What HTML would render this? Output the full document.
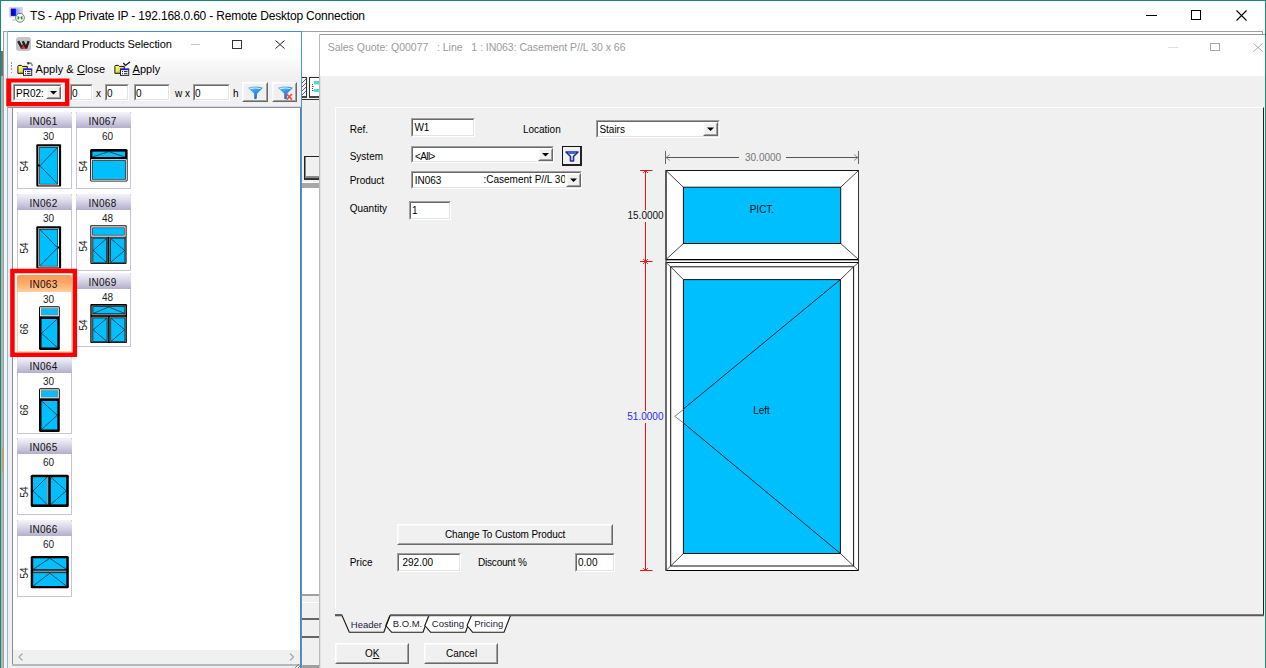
<!DOCTYPE html><html><head><meta charset="utf-8"><style>
*{margin:0;padding:0}
html,body{width:1266px;height:668px;overflow:hidden;background:#fff;position:relative;font-family:'Liberation Sans',sans-serif}
.a{position:absolute}
.t{position:absolute;white-space:nowrap;font-family:'Liberation Sans',sans-serif}
svg{overflow:visible}
</style></head><body>
<svg class="a" style="left:5px;top:3px" width="30" height="25">
<defs><linearGradient id="scr" x1="0" y1="0" x2="1" y2="0"><stop offset="0" stop-color="#0000c8"/><stop offset="0.45" stop-color="#0a14f0"/><stop offset="0.55" stop-color="#8a9cff"/><stop offset="1" stop-color="#c8d4ff"/></linearGradient></defs>
<rect x="4.1" y="3.9" width="13.7" height="10.5" fill="#d6d6d6"/>
<rect x="5.8" y="5.6" width="10.3" height="7.3" fill="url(#scr)"/>
<rect x="7.1" y="16.4" width="3.6" height="1.3" fill="#cacaca"/>
<circle cx="15" cy="14.8" r="4.4" fill="#f6f6f6" stroke="#7a7a7a" stroke-width="1"/>
<path d="M12.6 13.4l1.3 1.4l-1.3 1.4M17.4 13.4l-1.3 1.4l1.3 1.4" stroke="#1a9a1a" stroke-width="1.3" fill="none"/>
</svg>
<div class="t " style="left:30px;top:9.84px;font-size:12px;line-height:12px;color:#000;letter-spacing:-0.19px">TS - App Private IP - 192.168.0.60 - Remote Desktop Connection</div>
<div class="a" style="left:1146px;top:15px;width:11px;height:1px;background:#000"></div>
<div class="a" style="left:1191px;top:10px;width:10px;height:10px;border:1px solid #000;box-sizing:border-box"></div>
<svg class="a" style="left:1236px;top:10px" width="11" height="11"><path d="M0.5 0.5L10.5 10.5M10.5 0.5L0.5 10.5" stroke="#000" stroke-width="1.1"/></svg>
<div class="a" style="left:3px;top:31px;width:1260px;height:1px;background:#a0a0a0"></div>
<div class="a" style="left:3px;top:31px;width:1px;height:637px;background:#a0a0a0"></div>
<div class="a" style="left:1px;top:32px;width:2px;height:19px;background:#fff"></div>
<div class="a" style="left:1px;top:51px;width:2px;height:25px;background:#6e6e6e"></div>
<div class="a" style="left:1px;top:76px;width:2px;height:592px;background:#b4b4b4"></div>
<div class="a" style="left:2px;top:447px;width:1px;height:25px;background:#d8a050"></div>
<div class="a" style="left:4px;top:32px;width:3px;height:636px;background:#f6f4f2"></div>
<div class="a" style="left:302px;top:32px;width:17px;height:636px;background:#fff"></div>
<div class="a" style="left:302px;top:76px;width:17px;height:24px;background:#f0f0f0"></div>
<div class="a" style="left:300px;top:77px;width:7px;height:21px;border:1px solid #333;border-bottom:2px solid #444;box-sizing:border-box;background:#f4f4f4"></div>
<svg class="a" style="left:301px;top:78px" width="5" height="18"><path d="M0 6L5 1M0 10L5 5M0 14L5 9M1 17L5 13" stroke="#555" stroke-width="0.9"/></svg>
<div class="a" style="left:309px;top:77px;width:10px;height:21px;border:1px solid #333;border-bottom:2px solid #444;border-right:none;box-sizing:border-box;background:#fff"></div>
<svg class="a" style="left:311px;top:80px" width="8" height="15"><rect x="3" y="1" width="5" height="3.5" fill="#4dd8e0"/><rect x="3" y="9" width="5" height="3" fill="#4dd8e0"/><path d="M1.5 4v8M1.5 6.5h1.5M1.5 10.5h1.5" stroke="#444" stroke-dasharray="1 1"/></svg>
<div class="a" style="left:302px;top:99px;width:17px;height:1px;background:#333"></div>
<div class="a" style="left:302px;top:100px;width:17px;height:83px;background:#f0f0f0"></div>
<div class="a" style="left:304px;top:156px;width:15px;height:24px;border-top:1px solid #222;border-left:1px solid #222;border-bottom:2px solid #333;box-sizing:border-box;background:#f0f0f0"></div>
<div class="a" style="left:305px;top:157px;width:1px;height:21px;background:#8a8a8a"></div>
<div class="a" style="left:305px;top:176px;width:14px;height:2px;background:#8a8a8a"></div>
<div class="a" style="left:302px;top:182px;width:17px;height:1px;background:#fff"></div>
<div class="a" style="left:302px;top:183px;width:17px;height:5px;background:#a8a8a8"></div>
<div class="a" style="left:302px;top:594px;width:17px;height:74px;background:#f0f0f0"></div>
<div class="a" style="left:302px;top:594px;width:17px;height:2px;background:#a0a0a0"></div>
<div class="a" style="left:302px;top:602px;width:17px;height:1px;background:#fff"></div>
<div class="a" style="left:302px;top:618px;width:17px;height:2px;background:#666"></div>
<div class="a" style="left:302px;top:636px;width:17px;height:2px;background:#666"></div>
<div class="a" style="left:302px;top:665px;width:17px;height:3px;background:#a0a0a0"></div>
<div class="a" style="left:7px;top:31px;width:295px;height:637px;background:#f0f0f0"></div>
<div class="a" style="left:7px;top:31px;width:295px;height:1px;background:#3f8fdc"></div>
<div class="a" style="left:7px;top:31px;width:1px;height:637px;background:#82b9e9"></div>
<div class="a" style="left:301px;top:31px;width:1px;height:637px;background:#4a93dd"></div>
<div class="a" style="left:8px;top:32px;width:293px;height:25px;background:#fff"></div>
<svg class="a" style="left:16px;top:37px" width="15" height="14">
<rect x="0" y="0" width="15" height="14" rx="3" fill="#c4c4c4"/>
<path d="M2.2 4.2L6.2 11.3L8.3 6.5M6.8 4.2L10.1 11.3L12.6 4.2" stroke="#222" stroke-width="2.4" fill="none" stroke-linejoin="bevel"/>
<path d="M5 11.8L7.2 7.4L9.4 11.8Z" fill="#ff2020"/>
</svg>
<div class="t " style="left:35.5px;top:39.19px;font-size:11px;line-height:11px;color:#000;letter-spacing:-0.12px">Standard Products Selection</div>
<div class="a" style="left:191px;top:44px;width:9px;height:1px;background:#c8c8c8"></div>
<div class="a" style="left:232px;top:40px;width:10px;height:9px;border:1px solid #333;box-sizing:border-box"></div>
<svg class="a" style="left:275px;top:40px" width="10" height="9"><path d="M0.5 0.5L9.5 8.5M9.5 0.5L0.5 8.5" stroke="#222" stroke-width="1"/></svg>
<div class="a" style="left:8px;top:57px;width:293px;height:21px;background:linear-gradient(#fdfdfd,#f0f0f0)"></div>
<div class="a" style="left:11px;top:62.0px;width:1px;height:1.6px;background:#9a9a9a"></div>
<div class="a" style="left:11px;top:65.2px;width:1px;height:1.6px;background:#9a9a9a"></div>
<div class="a" style="left:11px;top:68.4px;width:1px;height:1.6px;background:#9a9a9a"></div>
<div class="a" style="left:11px;top:71.6px;width:1px;height:1.6px;background:#9a9a9a"></div>
<svg class="a" style="left:16px;top:61px" width="18" height="16">
<defs><linearGradient id="fo16" x1="0" y1="0" x2="1" y2="1"><stop offset="0" stop-color="#ffff80"/><stop offset="0.45" stop-color="#f0ea50"/><stop offset="1" stop-color="#8a8a10"/></linearGradient></defs>
<path d="M1.9 5.4Q1.9 4.4 2.9 4.4H5.4L6.4 5.4H11.3V12.3H1.9Z" fill="url(#fo16)" stroke="#111" stroke-width="1"/>
<rect x="7.5" y="8.1" width="8.2" height="6.3" fill="#fff" stroke="#2a2a2a" stroke-width="1"/>
<rect x="7" y="7.6" width="9.2" height="1.6" fill="#1a1aff"/>
<path d="M9 10.6h1M11 10.6h3.5M9 12.7h1M11 12.7h3.5" stroke="#222" stroke-width="1"/><path d="M12.6 2.6Q15.2 0.6 16.4 4.9" stroke="#7a7a7a" fill="none" stroke-width="1.4"/><path d="M10.9 1.3L13.6 1.6L12 4.1Z" fill="#111"/></svg>
<div class="t " style="left:35.5px;top:64.19px;font-size:11px;line-height:11px;color:#000;letter-spacing:0.05px">Apply &amp; <u>C</u>lose</div>
<svg class="a" style="left:113px;top:61px" width="18" height="16">
<defs><linearGradient id="fo113" x1="0" y1="0" x2="1" y2="1"><stop offset="0" stop-color="#ffff80"/><stop offset="0.45" stop-color="#f0ea50"/><stop offset="1" stop-color="#8a8a10"/></linearGradient></defs>
<path d="M1.9 5.4Q1.9 4.4 2.9 4.4H5.4L6.4 5.4H11.3V12.3H1.9Z" fill="url(#fo113)" stroke="#111" stroke-width="1"/>
<rect x="7.5" y="8.1" width="8.2" height="6.3" fill="#fff" stroke="#2a2a2a" stroke-width="1"/>
<rect x="7" y="7.6" width="9.2" height="1.6" fill="#1a1aff"/>
<path d="M9 10.6h1M11 10.6h3.5M9 12.7h1M11 12.7h3.5" stroke="#222" stroke-width="1"/><path d="M10.3 2L12.4 4.4L17 0.9" stroke="#111" fill="none" stroke-width="1.3"/></svg>
<div class="t " style="left:132.5px;top:64.19px;font-size:11px;line-height:11px;color:#000;letter-spacing:0.05px"><u>A</u>pply</div>
<div class="a" style="left:8px;top:78px;width:293px;height:29px;background:#f0f0f0"></div>
<div class="a" style="left:13px;top:84px;width:49px;height:17px;background:#fff;border-top:1px solid #a0a0a0;border-left:1px solid #a0a0a0;border-right:1px solid #fff;border-bottom:1px solid #fff;box-sizing:border-box;"></div>
<div class="a" style="left:14px;top:85px;width:47px;height:15px;border-top:1px solid #696969;border-left:1px solid #696969;border-right:1px solid #e3e3e3;border-bottom:1px solid #e3e3e3;box-sizing:border-box;"></div>
<div class="t " style="left:16px;top:89.44px;font-size:10px;line-height:10px;color:#000;">PR02:</div>
<div class="a" style="left:46px;top:86px;width:15px;height:13px;background:#f0f0f0;border-top:1px solid #fff;border-left:1px solid #fff;border-right:1px solid #696969;border-bottom:1px solid #696969;box-sizing:border-box;"></div>
<div class="a" style="left:47px;top:87px;width:13px;height:11px;border-right:1px solid #a0a0a0;border-bottom:1px solid #a0a0a0;border-top:1px solid #f8f8f8;border-left:1px solid #f8f8f8;box-sizing:border-box;"></div>
<svg class="a" style="left:46px;top:86px" width="15" height="13"><path d="M4.0 5.0h7l-3.5 3.5z" fill="#000"/></svg>
<div class="a" style="left:70px;top:84px;width:23px;height:17px;background:#fff;border-top:1px solid #a0a0a0;border-left:1px solid #a0a0a0;border-right:1px solid #fff;border-bottom:1px solid #fff;box-sizing:border-box;"></div>
<div class="a" style="left:71px;top:85px;width:21px;height:15px;border-top:1px solid #696969;border-left:1px solid #696969;border-right:1px solid #e3e3e3;border-bottom:1px solid #e3e3e3;box-sizing:border-box;"></div>
<div class="t " style="left:72px;top:89.44px;font-size:10px;line-height:10px;color:#000;">0</div>
<div class="t " style="left:96px;top:89.44px;font-size:10px;line-height:10px;color:#000;">x</div>
<div class="a" style="left:105px;top:84px;width:24px;height:17px;background:#fff;border-top:1px solid #a0a0a0;border-left:1px solid #a0a0a0;border-right:1px solid #fff;border-bottom:1px solid #fff;box-sizing:border-box;"></div>
<div class="a" style="left:106px;top:85px;width:22px;height:15px;border-top:1px solid #696969;border-left:1px solid #696969;border-right:1px solid #e3e3e3;border-bottom:1px solid #e3e3e3;box-sizing:border-box;"></div>
<div class="t " style="left:107px;top:89.44px;font-size:10px;line-height:10px;color:#000;">0</div>
<div class="a" style="left:134px;top:84px;width:36px;height:17px;background:#fff;border-top:1px solid #a0a0a0;border-left:1px solid #a0a0a0;border-right:1px solid #fff;border-bottom:1px solid #fff;box-sizing:border-box;"></div>
<div class="a" style="left:135px;top:85px;width:34px;height:15px;border-top:1px solid #696969;border-left:1px solid #696969;border-right:1px solid #e3e3e3;border-bottom:1px solid #e3e3e3;box-sizing:border-box;"></div>
<div class="t " style="left:136px;top:89.44px;font-size:10px;line-height:10px;color:#000;">0</div>
<div class="t " style="left:175px;top:89.44px;font-size:10px;line-height:10px;color:#000;">w x</div>
<div class="a" style="left:193px;top:84px;width:37px;height:17px;background:#fff;border-top:1px solid #a0a0a0;border-left:1px solid #a0a0a0;border-right:1px solid #fff;border-bottom:1px solid #fff;box-sizing:border-box;"></div>
<div class="a" style="left:194px;top:85px;width:35px;height:15px;border-top:1px solid #696969;border-left:1px solid #696969;border-right:1px solid #e3e3e3;border-bottom:1px solid #e3e3e3;box-sizing:border-box;"></div>
<div class="t " style="left:195px;top:89.44px;font-size:10px;line-height:10px;color:#000;">0</div>
<div class="t " style="left:233px;top:89.44px;font-size:10px;line-height:10px;color:#000;">h</div>
<div class="a" style="left:242px;top:82px;width:26px;height:20px;background:#f0f0f0;border-top:1px solid #fff;border-left:1px solid #fff;border-right:1px solid #696969;border-bottom:1px solid #696969;box-sizing:border-box;"></div>
<div class="a" style="left:243px;top:83px;width:24px;height:18px;border-right:1px solid #a0a0a0;border-bottom:1px solid #a0a0a0;border-top:1px solid #f8f8f8;border-left:1px solid #f8f8f8;box-sizing:border-box;"></div>
<svg class="a" style="left:247px;top:86px" width="17" height="15">
<defs><linearGradient id="fg247" x1="0" y1="0" x2="0.6" y2="1"><stop offset="0" stop-color="#7cc6f6"/><stop offset="0.5" stop-color="#3a98e4"/><stop offset="1" stop-color="#1864c4"/></linearGradient></defs>
<path d="M0.8 1.8Q8.4 -0.8 16 1.8L10.2 7.4L9.7 12.6Q8.6 13.6 7.3 12.8L7.1 7.4Z" fill="url(#fg247)"/>
<path d="M3 2.6Q8.4 1.4 13.6 2.6" stroke="#d6f0ff" stroke-width="1" fill="none"/></svg>
<div class="a" style="left:272px;top:82px;width:25px;height:20px;background:#f0f0f0;border-top:1px solid #fff;border-left:1px solid #fff;border-right:1px solid #696969;border-bottom:1px solid #696969;box-sizing:border-box;"></div>
<div class="a" style="left:273px;top:83px;width:23px;height:18px;border-right:1px solid #a0a0a0;border-bottom:1px solid #a0a0a0;border-top:1px solid #f8f8f8;border-left:1px solid #f8f8f8;box-sizing:border-box;"></div>
<svg class="a" style="left:277px;top:86px" width="17" height="15">
<defs><linearGradient id="fg277" x1="0" y1="0" x2="0.6" y2="1"><stop offset="0" stop-color="#7cc6f6"/><stop offset="0.5" stop-color="#3a98e4"/><stop offset="1" stop-color="#1864c4"/></linearGradient></defs>
<path d="M0.8 1.8Q8.4 -0.8 16 1.8L10.2 7.4L9.7 12.6Q8.6 13.6 7.3 12.8L7.1 7.4Z" fill="url(#fg277)"/>
<path d="M3 2.6Q8.4 1.4 13.6 2.6" stroke="#d6f0ff" stroke-width="1" fill="none"/><path d="M9.6 8L15 13.6M15 8L9.6 13.6" stroke="#ff4646" stroke-width="1.7"/></svg>
<div class="a" style="left:8px;top:106px;width:293px;height:1px;background:#d6d7dc"></div>
<div class="a" style="left:8px;top:107px;width:293px;height:1px;background:#8e92a2"></div>
<div class="a" style="left:12px;top:108px;width:289px;height:557px;background:#fff"></div>
<div class="a" style="left:12px;top:108px;width:1px;height:557px;background:#8a8c98"></div>
<div class="a" style="left:12px;top:664px;width:289px;height:2px;background:#b4b8c2"></div>
<svg class="a" style="left:294px;top:662px" width="7" height="6"><path d="M1 6L6 1M4 6L6 4" stroke="#777" stroke-width="1"/></svg>
<div class="a" style="left:300px;top:108px;width:1px;height:560px;background:#6a7f95"></div>
<div class="a" style="left:13px;top:650px;width:287px;height:14px;background:#f0f0f0"></div>
<svg class="a" style="left:18px;top:653px" width="6" height="8"><path d="M4.5 0.5L1 4l3.5 3.5" stroke="#a8a8a8" fill="none" stroke-width="1.2"/></svg>
<svg class="a" style="left:289px;top:653px" width="6" height="8"><path d="M1 0.5L4.5 4L1 7.5" stroke="#a8a8a8" fill="none" stroke-width="1.2"/></svg>
<div class="a" style="left:17px;top:112px;width:55px;height:77px;border:1px solid #c6c3da;border-top:none;box-sizing:border-box;background:#fff"></div>
<div class="a" style="left:17px;top:112px;width:55px;height:16px;background:linear-gradient(#f5f4fa,#d6d3e6 50%,#b3afca);border-radius:3px 3px 0 0"></div>
<div class="t" style="left:16px;top:116.83px;width:55px;text-align:center;font-size:10px;line-height:10px;color:#111;letter-spacing:0.3px">IN061</div>
<div class="t" style="left:37px;top:131.73px;width:23px;text-align:center;font-size:10px;line-height:10px;color:#222">30</div>
<div class="t" style="left:15px;top:161px;width:20px;height:10px;text-align:center;font-size:10px;line-height:10px;color:#222;transform:rotate(-90deg)">54</div>
<svg class="a" style="left:17px;top:112px" width="55" height="77"><rect x="19.3" y="32.2" width="24.8" height="42.4" rx="1" fill="#000"/><rect x="21.4" y="34.1" width="20.6" height="39.3" fill="#fff"/><rect x="21.4" y="34.1" width="20.6" height="1.2" fill="#8a8a8a"/><rect x="22.3" y="35.0" width="18.8" height="37.5" fill="#111"/><rect x="22.9" y="35.6" width="17.6" height="36.3" fill="#00bfff"/><path d="M40.5 35.6L22.9 53.75L40.5 71.9" stroke="#1a1a1a" stroke-width="0.7" fill="none"/><rect x="20.5" y="52.5" width="2.2" height="2" fill="#000"/></svg>
<div class="a" style="left:76px;top:112px;width:55px;height:77px;border:1px solid #c6c3da;border-top:none;box-sizing:border-box;background:#fff"></div>
<div class="a" style="left:76px;top:112px;width:55px;height:16px;background:linear-gradient(#f5f4fa,#d6d3e6 50%,#b3afca);border-radius:3px 3px 0 0"></div>
<div class="t" style="left:75px;top:116.83px;width:55px;text-align:center;font-size:10px;line-height:10px;color:#111;letter-spacing:0.3px">IN067</div>
<div class="t" style="left:96px;top:131.73px;width:23px;text-align:center;font-size:10px;line-height:10px;color:#222">60</div>
<div class="t" style="left:74px;top:161px;width:20px;height:10px;text-align:center;font-size:10px;line-height:10px;color:#222;transform:rotate(-90deg)">54</div>
<svg class="a" style="left:76px;top:112px" width="55" height="77"><rect x="14.1" y="37.1" width="37.5" height="32.4" rx="1.5" fill="#000"/><rect x="16.4" y="39.6" width="32.6" height="5.4" fill="#00bfff"/><path d="M16.4 45.0L32.7 39.6L49.0 45.0" stroke="#1a1a1a" stroke-width="0.7" fill="none"/><rect x="14.9" y="47.0" width="35.9" height="21.8" rx="1" fill="#fff"/><rect x="15.7" y="47.6" width="34.3" height="20.6" fill="#7a7a7a"/><rect x="16.2" y="48.6" width="33.3" height="18.6" fill="#111"/><rect x="16.6" y="49.0" width="32.5" height="18.0" fill="#00bfff"/></svg>
<div class="a" style="left:17px;top:194px;width:55px;height:77px;border:1px solid #c6c3da;border-top:none;box-sizing:border-box;background:#fff"></div>
<div class="a" style="left:17px;top:194px;width:55px;height:16px;background:linear-gradient(#f5f4fa,#d6d3e6 50%,#b3afca);border-radius:3px 3px 0 0"></div>
<div class="t" style="left:16px;top:198.83px;width:55px;text-align:center;font-size:10px;line-height:10px;color:#111;letter-spacing:0.3px">IN062</div>
<div class="t" style="left:37px;top:213.73px;width:23px;text-align:center;font-size:10px;line-height:10px;color:#222">30</div>
<div class="t" style="left:15px;top:243px;width:20px;height:10px;text-align:center;font-size:10px;line-height:10px;color:#222;transform:rotate(-90deg)">54</div>
<svg class="a" style="left:17px;top:194px" width="55" height="77"><rect x="19.3" y="32.2" width="24.8" height="42.4" rx="1" fill="#000"/><rect x="21.4" y="34.1" width="20.6" height="39.3" fill="#fff"/><rect x="21.4" y="34.1" width="20.6" height="1.2" fill="#8a8a8a"/><rect x="22.3" y="35.0" width="18.8" height="37.5" fill="#111"/><rect x="22.9" y="35.6" width="17.6" height="36.3" fill="#00bfff"/><path d="M22.9 35.6L40.5 53.75L22.9 71.9" stroke="#1a1a1a" stroke-width="0.7" fill="none"/><rect x="41" y="52.5" width="2.2" height="2" fill="#000"/></svg>
<div class="a" style="left:76px;top:194px;width:55px;height:77px;border:1px solid #c6c3da;border-top:none;box-sizing:border-box;background:#fff"></div>
<div class="a" style="left:76px;top:194px;width:55px;height:16px;background:linear-gradient(#f5f4fa,#d6d3e6 50%,#b3afca);border-radius:3px 3px 0 0"></div>
<div class="t" style="left:75px;top:198.83px;width:55px;text-align:center;font-size:10px;line-height:10px;color:#111;letter-spacing:0.3px">IN068</div>
<div class="t" style="left:96px;top:213.73px;width:23px;text-align:center;font-size:10px;line-height:10px;color:#222">48</div>
<div class="t" style="left:74px;top:241.2px;width:20px;height:10px;text-align:center;font-size:10px;line-height:10px;color:#222;transform:rotate(-90deg)">54</div>
<svg class="a" style="left:76px;top:194px" width="55" height="77"><rect x="14.3" y="31.3" width="36.3" height="38.8" rx="1" fill="#111"/><rect x="15.3" y="32.3" width="34.3" height="10.4" fill="#fff"/><rect x="16.3" y="33.5" width="32.3" height="8" fill="#111"/><rect x="16.9" y="34.1" width="31.1" height="6.8" fill="#00bfff"/><rect x="15.3" y="43.5" width="16.2" height="25.6" fill="#8a8a8a"/><rect x="16.6" y="44" width="14.3" height="24.7" fill="#111"/><rect x="17.2" y="44.5" width="13.1" height="23.8" fill="#00bfff"/><path d="M30.299999999999997 44.5L17.2 56.4L30.299999999999997 68.3" stroke="#1a1a1a" stroke-width="0.7" fill="none"/><rect x="33.2" y="43.5" width="16.4" height="25.6" fill="#8a8a8a"/><rect x="34.2" y="44" width="14.9" height="24.7" fill="#111"/><rect x="34.8" y="44.5" width="13.8" height="23.8" fill="#00bfff"/><path d="M34.8 44.5L48.599999999999994 56.4L34.8 68.3" stroke="#1a1a1a" stroke-width="0.7" fill="none"/></svg>
<div class="a" style="left:17px;top:275px;width:55px;height:77px;border:1px solid #f9d3a8;border-top:none;box-sizing:border-box;background:#fff"></div>
<div class="a" style="left:17px;top:275px;width:55px;height:16.5px;background:linear-gradient(#ff9a55,#ffa466 40%,#ffbb80 75%,#ffcf9c);border-radius:3px 3px 0 0"></div>
<div class="t" style="left:16px;top:279.83px;width:55px;text-align:center;font-size:10px;line-height:10px;color:#111;letter-spacing:0.3px">IN063</div>
<div class="t" style="left:37px;top:294.73px;width:23px;text-align:center;font-size:10px;line-height:10px;color:#222">30</div>
<div class="t" style="left:15px;top:324.3px;width:20px;height:10px;text-align:center;font-size:10px;line-height:10px;color:#222;transform:rotate(-90deg)">66</div>
<svg class="a" style="left:17px;top:276px" width="55" height="77"><rect x="22" y="30.3" width="20.8" height="43.7" rx="1.5" fill="#000"/><rect x="23" y="31.3" width="18.8" height="9" fill="#fff"/><rect x="23.8" y="32.1" width="17.2" height="7.4" fill="#8a8a8a"/><rect x="24.6" y="32.9" width="15.6" height="5.8" fill="#00bfff"/><rect x="24.5" y="43" width="15.8" height="28.5" fill="#00bfff"/><path d="M40.3 43L24.5 57.25L40.3 71.5" stroke="#1a1a1a" stroke-width="0.7" fill="none"/></svg>
<div class="a" style="left:76px;top:273px;width:55px;height:74px;border:1px solid #c6c3da;border-top:none;box-sizing:border-box;background:#fff"></div>
<div class="a" style="left:76px;top:273px;width:55px;height:15.5px;background:linear-gradient(#f5f4fa,#d6d3e6 50%,#b3afca);border-radius:3px 3px 0 0"></div>
<div class="t" style="left:75px;top:277.83px;width:55px;text-align:center;font-size:10px;line-height:10px;color:#111;letter-spacing:0.3px">IN069</div>
<div class="t" style="left:96px;top:292.73px;width:23px;text-align:center;font-size:10px;line-height:10px;color:#222">48</div>
<div class="t" style="left:74px;top:319.5px;width:20px;height:10px;text-align:center;font-size:10px;line-height:10px;color:#222;transform:rotate(-90deg)">54</div>
<svg class="a" style="left:76px;top:276px" width="55" height="77"><rect x="14.3" y="28.1" width="36.7" height="38.9" rx="1" fill="#000"/><rect x="15.5" y="29.6" width="34.3" height="9.6" rx="1" fill="#8a8a8a"/><rect x="16.6" y="30.3" width="32.6" height="7.8" fill="#111"/><rect x="17.3" y="30.9" width="31.2" height="6.5" fill="#00bfff"/><path d="M17.3 37.4L32.9 30.9L48.5 37.4" stroke="#1a1a1a" stroke-width="0.7" fill="none"/><rect x="15.3" y="40.8" width="16.9" height="25.5" rx="1" fill="#8a8a8a"/><rect x="16.5" y="41.7" width="14.9" height="24.2" fill="#111"/><rect x="17.2" y="42.3" width="13.5" height="23" fill="#00bfff"/><path d="M30.7 42.3L17.2 53.8L30.7 65.3" stroke="#1a1a1a" stroke-width="0.7" fill="none"/><rect x="33.5" y="40.8" width="16.8" height="25.5" rx="1" fill="#8a8a8a"/><rect x="34.5" y="41.7" width="14.9" height="24.2" fill="#111"/><rect x="35.1" y="42.3" width="13.5" height="23" fill="#00bfff"/><path d="M35.1 42.3L48.6 53.8L35.1 65.3" stroke="#1a1a1a" stroke-width="0.7" fill="none"/></svg>
<div class="a" style="left:17px;top:357px;width:55px;height:77px;border:1px solid #c6c3da;border-top:none;box-sizing:border-box;background:#fff"></div>
<div class="a" style="left:17px;top:357px;width:55px;height:16px;background:linear-gradient(#f5f4fa,#d6d3e6 50%,#b3afca);border-radius:3px 3px 0 0"></div>
<div class="t" style="left:16px;top:361.83px;width:55px;text-align:center;font-size:10px;line-height:10px;color:#111;letter-spacing:0.3px">IN064</div>
<div class="t" style="left:37px;top:376.73px;width:23px;text-align:center;font-size:10px;line-height:10px;color:#222">30</div>
<div class="t" style="left:15px;top:405px;width:20px;height:10px;text-align:center;font-size:10px;line-height:10px;color:#222;transform:rotate(-90deg)">66</div>
<svg class="a" style="left:17px;top:358px" width="55" height="77"><rect x="22" y="30.3" width="20.8" height="43.7" rx="1.5" fill="#000"/><rect x="23" y="31.3" width="18.8" height="9" fill="#fff"/><rect x="23.8" y="32.1" width="17.2" height="7.4" fill="#8a8a8a"/><rect x="24.6" y="32.9" width="15.6" height="5.8" fill="#00bfff"/><rect x="24.5" y="43" width="15.8" height="28.5" fill="#00bfff"/><path d="M24.5 43L40.3 57.25L24.5 71.5" stroke="#1a1a1a" stroke-width="0.7" fill="none"/></svg>
<div class="a" style="left:17px;top:438px;width:55px;height:77px;border:1px solid #c6c3da;border-top:none;box-sizing:border-box;background:#fff"></div>
<div class="a" style="left:17px;top:438px;width:55px;height:16px;background:linear-gradient(#f5f4fa,#d6d3e6 50%,#b3afca);border-radius:3px 3px 0 0"></div>
<div class="t" style="left:16px;top:442.83px;width:55px;text-align:center;font-size:10px;line-height:10px;color:#111;letter-spacing:0.3px">IN065</div>
<div class="t" style="left:37px;top:457.73px;width:23px;text-align:center;font-size:10px;line-height:10px;color:#222">60</div>
<div class="t" style="left:15px;top:486.9px;width:20px;height:10px;text-align:center;font-size:10px;line-height:10px;color:#222;transform:rotate(-90deg)">54</div>
<svg class="a" style="left:17px;top:440px" width="55" height="77"><rect x="13.7" y="34.7" width="38.1" height="32.2" rx="1.5" fill="#000"/><rect x="16.0" y="37.2" width="14.0" height="27.2" fill="#00bfff"/><path d="M30.0 37.2L16.0 50.800000000000004L30.0 64.4" stroke="#1a1a1a" stroke-width="0.7" fill="none"/><rect x="33.8" y="37.2" width="15.4" height="27.2" fill="#00bfff"/><path d="M33.8 37.2L49.199999999999996 50.800000000000004L33.8 64.4" stroke="#1a1a1a" stroke-width="0.7" fill="none"/><rect x="30" y="37.2" width="1.3" height="27.2" fill="#9a9a9a"/></svg>
<div class="a" style="left:17px;top:520px;width:55px;height:77px;border:1px solid #c6c3da;border-top:none;box-sizing:border-box;background:#fff"></div>
<div class="a" style="left:17px;top:520px;width:55px;height:16px;background:linear-gradient(#f5f4fa,#d6d3e6 50%,#b3afca);border-radius:3px 3px 0 0"></div>
<div class="t" style="left:16px;top:524.83px;width:55px;text-align:center;font-size:10px;line-height:10px;color:#111;letter-spacing:0.3px">IN066</div>
<div class="t" style="left:37px;top:539.73px;width:23px;text-align:center;font-size:10px;line-height:10px;color:#222">60</div>
<div class="t" style="left:15px;top:568.2px;width:20px;height:10px;text-align:center;font-size:10px;line-height:10px;color:#222;transform:rotate(-90deg)">54</div>
<svg class="a" style="left:17px;top:522px" width="55" height="77"><rect x="13.7" y="34" width="38.1" height="32.2" rx="1.5" fill="#000"/><rect x="16.2" y="36.3" width="33.1" height="11.0" fill="#00bfff"/><path d="M16.2 47.3L32.75 36.3L49.3 47.3" stroke="#1a1a1a" stroke-width="0.7" fill="none"/><rect x="16.2" y="51.1" width="33.1" height="12.9" fill="#00bfff"/><path d="M16.2 64.0L32.75 51.1L49.3 64.0" stroke="#1a1a1a" stroke-width="0.7" fill="none"/><rect x="16.2" y="48.5" width="33.1" height="1.9" fill="#8a8a8a"/></svg>
<svg class="a" style="left:0;top:0" width="100" height="400"><path fill-rule="evenodd" fill="#ff0000" d="M6.25 78.5H69.4V106.25H6.25Z M11.25 82.5V101.9H65V82.5Z M10.2 268.7H77.1V357H10.2Z M14.7 273.2V352.5H72.6V273.2Z"/></svg>
<div class="a" style="left:319px;top:34px;width:947px;height:634px;background:#f0f0f0"></div>
<div class="a" style="left:319px;top:34px;width:946px;height:1px;background:#9a9a9a"></div>
<div class="a" style="left:319px;top:34px;width:1px;height:634px;background:#bababa"></div>
<div class="a" style="left:320px;top:35px;width:1px;height:633px;background:#e2e2e2"></div>
<div class="a" style="left:1262px;top:31px;width:1px;height:3px;background:#a0a0a0"></div>
<div class="a" style="left:320px;top:35px;width:945px;height:41px;background:#fff"></div>
<div class="t " style="left:327.7px;top:41.71px;font-size:10.5px;line-height:10.5px;color:#9b9b9b;letter-spacing:-0.02px">Sales Quote: Q00077&nbsp;&nbsp; : Line&nbsp;&nbsp; 1 : IN063: Casement P//L 30 x 66</div>
<div class="a" style="left:1168px;top:47px;width:10px;height:1px;background:#e0e0e0"></div>
<div class="a" style="left:1210px;top:43px;width:10px;height:8px;border:1px solid #a8a8a8;box-sizing:border-box"></div>
<svg class="a" style="left:1253px;top:43px" width="10" height="9"><path d="M0.5 0.5L9.5 8.5M9.5 0.5L0.5 8.5" stroke="#a8a8a8" stroke-width="1"/></svg>
<div class="a" style="left:335px;top:107px;width:929px;height:508px;border-top:1px solid #fff;border-left:1px solid #fff;border-right:1px solid #222;box-sizing:border-box"></div>
<div class="t " style="left:349.7px;top:125.03px;font-size:10px;line-height:10px;color:#000;">Ref.</div>
<div class="a" style="left:411px;top:118px;width:64px;height:19px;background:#fff;border-top:1px solid #a0a0a0;border-left:1px solid #a0a0a0;border-right:1px solid #fff;border-bottom:1px solid #fff;box-sizing:border-box;"></div>
<div class="a" style="left:412px;top:119px;width:62px;height:17px;border-top:1px solid #696969;border-left:1px solid #696969;border-right:1px solid #e3e3e3;border-bottom:1px solid #e3e3e3;box-sizing:border-box;"></div>
<div class="t " style="left:414.4px;top:122.94px;font-size:10px;line-height:10px;color:#000;">W1</div>
<div class="t " style="left:522.9px;top:124.73px;font-size:10px;line-height:10px;color:#000;">Location</div>
<div class="a" style="left:596px;top:120px;width:124px;height:18px;background:#fff;border-top:1px solid #a0a0a0;border-left:1px solid #a0a0a0;border-right:1px solid #fff;border-bottom:1px solid #fff;box-sizing:border-box;"></div>
<div class="a" style="left:597px;top:121px;width:122px;height:16px;border-top:1px solid #696969;border-left:1px solid #696969;border-right:1px solid #e3e3e3;border-bottom:1px solid #e3e3e3;box-sizing:border-box;"></div>
<div class="t " style="left:599.4px;top:124.73px;font-size:10px;line-height:10px;color:#000;">Stairs</div>
<div class="a" style="left:703px;top:122px;width:15px;height:14px;background:#f0f0f0;border-top:1px solid #fff;border-left:1px solid #fff;border-right:1px solid #696969;border-bottom:1px solid #696969;box-sizing:border-box;"></div>
<div class="a" style="left:704px;top:123px;width:13px;height:12px;border-right:1px solid #a0a0a0;border-bottom:1px solid #a0a0a0;border-top:1px solid #f8f8f8;border-left:1px solid #f8f8f8;box-sizing:border-box;"></div>
<svg class="a" style="left:703px;top:122px" width="15" height="14"><path d="M4.0 5.5h7l-3.5 3.5z" fill="#000"/></svg>
<div class="t " style="left:349.7px;top:151.84px;font-size:10px;line-height:10px;color:#000;">System</div>
<div class="a" style="left:411px;top:146px;width:143px;height:17px;background:#fff;border-top:1px solid #a0a0a0;border-left:1px solid #a0a0a0;border-right:1px solid #fff;border-bottom:1px solid #fff;box-sizing:border-box;"></div>
<div class="a" style="left:412px;top:147px;width:141px;height:15px;border-top:1px solid #696969;border-left:1px solid #696969;border-right:1px solid #e3e3e3;border-bottom:1px solid #e3e3e3;box-sizing:border-box;"></div>
<div class="t " style="left:415px;top:151.63px;font-size:10px;line-height:10px;color:#000;letter-spacing:-0.6px">&lt;All&gt;</div>
<div class="a" style="left:538px;top:148px;width:15px;height:13px;background:#f0f0f0;border-top:1px solid #fff;border-left:1px solid #fff;border-right:1px solid #696969;border-bottom:1px solid #696969;box-sizing:border-box;"></div>
<div class="a" style="left:539px;top:149px;width:13px;height:11px;border-right:1px solid #a0a0a0;border-bottom:1px solid #a0a0a0;border-top:1px solid #f8f8f8;border-left:1px solid #f8f8f8;box-sizing:border-box;"></div>
<svg class="a" style="left:538px;top:148px" width="15" height="13"><path d="M4.0 5.0h7l-3.5 3.5z" fill="#000"/></svg>
<div class="a" style="left:562px;top:146px;width:20px;height:20px;border:1px solid #111;border-right:2px solid #222;border-bottom:2px solid #222;box-sizing:border-box;background:#f0f0f0"></div>
<svg class="a" style="left:565px;top:151px" width="14" height="11"><path d="M1 1h12l-4.5 4.5v4.5h-3v-4.5z" fill="none" stroke="#1a2fa8" stroke-width="1.6" stroke-linejoin="round"/><path d="M3 2.5h8" stroke="#3a6ae0" stroke-width="1"/></svg>
<div class="t " style="left:349.7px;top:175.84px;font-size:10px;line-height:10px;color:#000;">Product</div>
<div class="a" style="left:411px;top:171px;width:171px;height:18px;background:#fff;border-top:1px solid #a0a0a0;border-left:1px solid #a0a0a0;border-right:1px solid #fff;border-bottom:1px solid #fff;box-sizing:border-box;"></div>
<div class="a" style="left:412px;top:172px;width:169px;height:16px;border-top:1px solid #696969;border-left:1px solid #696969;border-right:1px solid #e3e3e3;border-bottom:1px solid #e3e3e3;box-sizing:border-box;"></div>
<div class="t " style="left:414.7px;top:176.03px;font-size:10px;line-height:10px;color:#000;">IN063</div>
<div class="a" style="left:483px;top:171px;width:82px;height:16px;overflow:hidden"><div class="t" style="left:0.5px;top:4.03px;font-size:10px;line-height:10px">:Casement P//L 30 x 66</div></div>
<div class="a" style="left:566px;top:173px;width:15px;height:14px;background:#f0f0f0;border-top:1px solid #fff;border-left:1px solid #fff;border-right:1px solid #696969;border-bottom:1px solid #696969;box-sizing:border-box;"></div>
<div class="a" style="left:567px;top:174px;width:13px;height:12px;border-right:1px solid #a0a0a0;border-bottom:1px solid #a0a0a0;border-top:1px solid #f8f8f8;border-left:1px solid #f8f8f8;box-sizing:border-box;"></div>
<svg class="a" style="left:566px;top:173px" width="15" height="14"><path d="M4.0 5.5h7l-3.5 3.5z" fill="#000"/></svg>
<div class="t " style="left:349.7px;top:204.44px;font-size:10px;line-height:10px;color:#000;">Quantity</div>
<div class="a" style="left:409px;top:201px;width:42px;height:19px;background:#fff;border-top:1px solid #a0a0a0;border-left:1px solid #a0a0a0;border-right:1px solid #fff;border-bottom:1px solid #fff;box-sizing:border-box;"></div>
<div class="a" style="left:410px;top:202px;width:40px;height:17px;border-top:1px solid #696969;border-left:1px solid #696969;border-right:1px solid #e3e3e3;border-bottom:1px solid #e3e3e3;box-sizing:border-box;"></div>
<div class="t " style="left:412px;top:205.53px;font-size:10px;line-height:10px;color:#000;">1</div>
<div class="a" style="left:397px;top:524px;width:216px;height:21px;background:#f0f0f0;border-top:1px solid #fff;border-left:1px solid #fff;border-right:1px solid #696969;border-bottom:1px solid #696969;box-sizing:border-box;"></div>
<div class="a" style="left:398px;top:525px;width:214px;height:19px;border-right:1px solid #a0a0a0;border-bottom:1px solid #a0a0a0;border-top:1px solid #f8f8f8;border-left:1px solid #f8f8f8;box-sizing:border-box;"></div>
<div class="t " style="left:445px;top:530.43px;font-size:10px;line-height:10px;color:#000;letter-spacing:-0.1px">Change To Custom Product</div>
<div class="t " style="left:349.7px;top:558.13px;font-size:10px;line-height:10px;color:#000;">Price</div>
<div class="a" style="left:397px;top:553px;width:64px;height:19px;background:#fff;border-top:1px solid #a0a0a0;border-left:1px solid #a0a0a0;border-right:1px solid #fff;border-bottom:1px solid #fff;box-sizing:border-box;"></div>
<div class="a" style="left:398px;top:554px;width:62px;height:17px;border-top:1px solid #696969;border-left:1px solid #696969;border-right:1px solid #e3e3e3;border-bottom:1px solid #e3e3e3;box-sizing:border-box;"></div>
<div class="t " style="left:402.5px;top:558.13px;font-size:10px;line-height:10px;color:#000;">292.00</div>
<div class="t " style="left:478px;top:558.13px;font-size:10px;line-height:10px;color:#000;letter-spacing:-0.2px">Discount %</div>
<div class="a" style="left:575px;top:553px;width:40px;height:19px;background:#fff;border-top:1px solid #a0a0a0;border-left:1px solid #a0a0a0;border-right:1px solid #fff;border-bottom:1px solid #fff;box-sizing:border-box;"></div>
<div class="a" style="left:576px;top:554px;width:38px;height:17px;border-top:1px solid #696969;border-left:1px solid #696969;border-right:1px solid #e3e3e3;border-bottom:1px solid #e3e3e3;box-sizing:border-box;"></div>
<div class="t " style="left:578px;top:558.13px;font-size:10px;line-height:10px;color:#000;">0.00</div>
<svg class="a" style="left:0px;top:0px" width="1266" height="668"><path d="M665.5 151v13M858.5 151v13" stroke="#666" stroke-width="1"/><path d="M666 157.5H739M786 157.5H858" stroke="#555" stroke-width="1"/><path d="M670 154.5L666 157.5L670 160.5M854 154.5L858 157.5L854 160.5" stroke="#777" stroke-width="0.8" fill="none"/><path d="M645.5 170.5V570.5M640 170.5H652.5M640 261.5H652.5M640 570.5H652.5" stroke="#f01010" stroke-width="1"/><path d="M643 173L645.5 170.5L648 173M643 259L645.5 261.5L648 259M643 264L645.5 261.5L648 264M643 568L645.5 570.5L648 568" stroke="#f01010" stroke-width="0.8" fill="none"/><rect x="666" y="170.5" width="192.5" height="89" fill="#fff" stroke="#111" stroke-width="1"/><rect x="683.4" y="187.2" width="157.3" height="56.3" fill="#00bfff" stroke="#111" stroke-width="1"/><path d="M666 170.5L683.4 187.2M858.5 170.5L840.7 187.2M666 259.5L683.4 243.5M858.5 259.5L840.7 243.5" stroke="#333" stroke-width="0.9"/><path d="M666 259.8H858.5" stroke="#000" stroke-width="1.6"/><rect x="666.5" y="260.6" width="191.5" height="1.4" fill="#fff"/><rect x="666" y="262.5" width="192.5" height="308" fill="#fff" stroke="#555" stroke-width="1"/><path d="M666 570.5H858.5" stroke="#000" stroke-width="1.1"/><rect x="670.7" y="266.8" width="182.9" height="299.2" fill="#fff" stroke="#111" stroke-width="1"/><rect x="683.4" y="279.6" width="157" height="273.9" fill="#00bfff" stroke="#111" stroke-width="1"/><path d="M666 170.5V570.5M858.5 170.5V570.5" stroke="#333" stroke-width="1"/><path d="M666 262.5H858.5" stroke="#111" stroke-width="1"/><path d="M666 262.5L670.7 266.8M858.5 262.5L853.6 266.8M666 570.5L670.7 566M858.5 570.5L853.6 566" stroke="#444" stroke-width="0.9"/><path d="M670.7 266.8L683.4 279.6M853.6 266.8L840.4 279.6M670.7 566L683.4 553.5M853.6 566L840.4 553.5" stroke="#333" stroke-width="0.9"/><path d="M840.4 279.6L683.4 409M683.4 423L840.4 553.5" stroke="#111" stroke-width="0.9" fill="none"/><path d="M683.4 409.5L674.7 416.3L683.4 422.8" stroke="#777" stroke-width="0.9" fill="none"/></svg>
<div class="t " style="left:745px;top:152.53px;font-size:10px;line-height:10px;color:#777;">30.0000</div>
<div class="t " style="left:627.5px;top:210.03px;font-size:10px;line-height:10px;color:#111;background:#f0f0f0;padding:1px 0">15.0000</div>
<div class="t " style="left:627.3px;top:411.14px;font-size:10px;line-height:10px;color:#2a2af0;background:#f0f0f0;padding:1px 0">51.0000</div>
<div class="t " style="left:749.7px;top:204.53px;font-size:10px;line-height:10px;color:#111;">PICT.</div>
<div class="t " style="left:753.2px;top:405.54px;font-size:10px;line-height:10px;color:#111;">Left</div>
<svg class="a" style="left:0;top:0" width="1266" height="668"><path d="M390 615L385.8 625.5L391.5 632H423L429 615Z" fill="#fff"/><path d="M390 615.5L385.8 625.5L391.5 632.2H423L429 615.5" stroke="#1a1a1a" stroke-width="1.1" fill="none" stroke-linejoin="round"/><path d="M429 615L424.8 625.5L430.5 632H465.5L471.5 615Z" fill="#fff"/><path d="M429 615.5L424.8 625.5L430.5 632.2H465.5L471.5 615.5" stroke="#1a1a1a" stroke-width="1.1" fill="none" stroke-linejoin="round"/><path d="M471.5 615L467 625.5L472.5 632H504L510.5 615Z" fill="#fff"/><path d="M471.5 615.5L467 625.5L472.5 632.2H504L510.5 615.5" stroke="#1a1a1a" stroke-width="1.1" fill="none" stroke-linejoin="round"/><path d="M335 615H341.8L349.3 632.2H383.8L390 615.5" stroke="#1a1a1a" stroke-width="1.1" fill="none" stroke-linejoin="round"/><path d="M335 615.3H342M390 615.3H1264" stroke="#5a5a5a" stroke-width="2"/></svg>
<div class="t " style="left:350.8px;top:619.56px;font-size:9.5px;line-height:9.5px;color:#1a1a3a;">Header</div>
<div class="t " style="left:392.7px;top:618.76px;font-size:9.5px;line-height:9.5px;color:#1a1a3a;">B.O.M.</div>
<div class="t " style="left:431.8px;top:618.76px;font-size:9.5px;line-height:9.5px;color:#1a1a3a;">Costing</div>
<div class="t " style="left:474.2px;top:618.76px;font-size:9.5px;line-height:9.5px;color:#1a1a3a;">Pricing</div>
<div class="a" style="left:335px;top:643px;width:74px;height:21px;background:#f0f0f0;border-top:1px solid #fff;border-left:1px solid #fff;border-right:1px solid #696969;border-bottom:1px solid #696969;box-sizing:border-box;"></div>
<div class="a" style="left:336px;top:644px;width:72px;height:19px;border-right:1px solid #a0a0a0;border-bottom:1px solid #a0a0a0;border-top:1px solid #f8f8f8;border-left:1px solid #f8f8f8;box-sizing:border-box;"></div>
<div class="t " style="left:365px;top:649.24px;font-size:10px;line-height:10px;color:#000;">O<u>K</u></div>
<div class="a" style="left:424px;top:643px;width:74px;height:21px;background:#f0f0f0;border-top:1px solid #fff;border-left:1px solid #fff;border-right:1px solid #696969;border-bottom:1px solid #696969;box-sizing:border-box;"></div>
<div class="a" style="left:425px;top:644px;width:72px;height:19px;border-right:1px solid #a0a0a0;border-bottom:1px solid #a0a0a0;border-top:1px solid #f8f8f8;border-left:1px solid #f8f8f8;box-sizing:border-box;"></div>
<div class="t " style="left:446px;top:649.24px;font-size:10px;line-height:10px;color:#000;">Cancel</div>
<div class="a" style="left:0px;top:0px;width:1266px;height:1px;background:#158a78"></div>
<div class="a" style="left:0px;top:0px;width:1px;height:668px;background:#158a78"></div>
<div class="a" style="left:1265px;top:0px;width:1px;height:668px;background:#158a78"></div>
</body></html>
